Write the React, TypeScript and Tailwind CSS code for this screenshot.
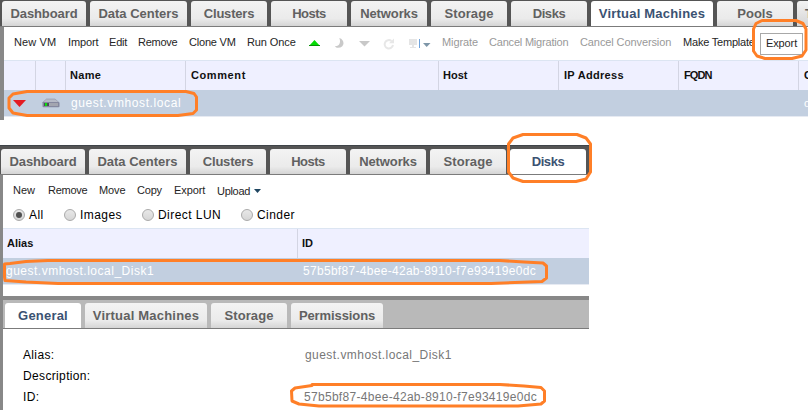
import type { ReactNode } from 'react';

type TabItem = { label: string; box: string; active?: boolean };

const vmTabs: TabItem[] = [
  { label: 'Dashboard', box: 'w-[84px] tracking-[-0.1px]' },
  { label: 'Data Centers', box: 'w-[97px] tracking-[0px]' },
  { label: 'Clusters', box: 'w-[76px] tracking-[-0.2px]' },
  { label: 'Hosts', box: 'w-[76px] tracking-[-0.5px]' },
  { label: 'Networks', box: 'w-[76px] tracking-[-0.1px]' },
  { label: 'Storage', box: 'w-[76px] tracking-[0.1px]' },
  { label: 'Disks', box: 'w-[76px] tracking-[-0.4px]' },
  { label: 'Virtual Machines', box: 'w-[122px] tracking-[0.2px]', active: true },
  { label: 'Pools', box: 'w-[76px] tracking-[0px]' },
];

const diskTabs: TabItem[] = [
  ...vmTabs.slice(0, 6),
  { label: 'Disks', box: 'w-[76px] tracking-[-0.4px]', active: true },
];

const detailTabs: TabItem[] = [
  { label: 'General', box: 'w-[76px] tracking-[0.2px]', active: true },
  { label: 'Virtual Machines', box: 'w-[122px] tracking-[0.2px]' },
  { label: 'Storage', box: 'w-[76px] tracking-[0.1px]' },
  { label: 'Permissions', box: 'w-[92px] tracking-[-0.1px]' },
];

function Tab({ label, box, active }: TabItem) {
  const look = active
    ? 'bg-white text-[#3b5272]'
    : 'bg-linear-to-b from-[#f3f3f3] via-[#ebebeb] via-70% to-[#d5d5d5] text-[#616161]';
  return (
    <div
      className={`flex h-full shrink-0 items-center justify-center rounded-t-[3px] text-[13px] font-bold whitespace-nowrap ${look} ${box}`}
    >
      {label}
    </div>
  );
}

function Tabs({ items }: { items: TabItem[] }) {
  return (
    <>
      {items.map((t) => (
        <Tab key={t.label} {...t} />
      ))}
    </>
  );
}

function Action({ children, box, muted }: { children: ReactNode; box: string; muted?: boolean }) {
  return (
    <span className={`shrink-0 whitespace-nowrap ${muted ? 'text-[#999]' : 'text-[#252525]'} ${box}`}>
      {children}
    </span>
  );
}

function Head({ children, box }: { children?: ReactNode; box: string }) {
  return (
    <div
      className={`flex h-full shrink-0 items-center border-r border-[#d3d5e3] text-[11px] font-bold whitespace-nowrap text-[#111] ${box}`}
    >
      {children}
    </div>
  );
}

function PowerIcons() {
  return (
    <svg className="h-4 w-[133px] shrink-0" viewBox="309 35 133 16">
      <path d="M309 46 L314.5 40 L320 46Z" fill="#04dc04" />
      <path d="M309 45.5H320" stroke="#079207" />
      <path d="M339.3 38 C345 39.5 345.3 47.8 338 47.8 C336.3 47.8 335.3 47 334.8 46.2 C339.8 46.5 341 42 339.3 38Z" fill="#c9c9c9" />
      <path d="M359 41H370L364.5 46.5Z" fill="#c8c8c8" />
      <path d="M391.5 41 A4.2 4.2 0 1 0 393 45" fill="none" stroke="#e7e7e7" strokeWidth="2" />
      <path d="M389 43.3H394V38.5Z" fill="#e7e7e7" />
      <path d="M409 39H417V45H414V47H416V48H410V47H412V45H409Z" fill="#e5e5e5" />
      <path d="M419.5 39V48" stroke="#6fa3dd" />
      <path d="M423 43H430.5L426.7 47Z" fill="#7e96a8" />
    </svg>
  );
}

function ServerIcon() {
  return (
    <svg className="h-[10px] w-[18px] shrink-0" viewBox="0 0 18 10">
      <path d="M4.500 1H13L17 4.500H0.500Z" fill="#b6bac7" stroke="#8f93a5" strokeWidth=".6" />
      <rect x="0.500" y="4" width="17" height="5.300" rx="1" fill="#85889f" />
      <rect x="2" y="5" width="14" height="3" fill="#4b4d58" />
      <rect x="3" y="5" width="2" height="3" fill="#0ce00c" />
      <rect x="7" y="5" width="9" height="3" fill="#a3a5b0" />
    </svg>
  );
}

function VmPanel() {
  return (
    <section className="flex h-[120px] w-full flex-col overflow-hidden">
      <div className="flex h-[27px] shrink-0 gap-1 border-b border-[#7b7b7b] bg-[#555] pt-px pl-[2px]">
        <Tabs items={vmTabs} />
        <div className="flex h-full w-20 shrink-0 items-center rounded-t-[3px] bg-linear-to-b from-[#f3f3f3] to-[#d5d5d5] pl-[8px] text-[13px] font-bold text-[#616161]">
          T
        </div>
      </div>
      <div className="flex min-h-0 flex-1">
        <div className="w-1 shrink-0 bg-[#888]" />
        <div className="flex min-w-0 flex-1 flex-col overflow-hidden">
          <div className="flex h-[33px] shrink-0 items-center pb-[2px] pl-[10px] text-[11px]">
            <Action box="w-[54px] tracking-[0.1px]">New VM</Action>
            <Action box="w-[41px] tracking-[-0.1px]">Import</Action>
            <Action box="w-[29px] tracking-[-0.2px]">Edit</Action>
            <Action box="w-[51px] tracking-[-0.25px]">Remove</Action>
            <Action box="w-[58px] tracking-[-0.2px]">Clone VM</Action>
            <Action box="w-[62px] tracking-[-0.1px]">Run Once</Action>
            <PowerIcons />
            <Action muted box="w-[47px] tracking-[-0.1px]">Migrate</Action>
            <Action muted box="w-[91px] tracking-[-0.2px]">Cancel Migration</Action>
            <Action muted box="w-[103px] tracking-[-0.1px]">Cancel Conversion</Action>
            <Action box="w-[77px] tracking-[-0.2px]">Make Template</Action>
            <div className="mt-[2px] flex h-[22px] w-[43px] shrink-0 items-center justify-center border border-[#a8a8a8] pb-px tracking-[-0.1px] text-[#252525]">
              Export
            </div>
          </div>
          <div className="flex h-[30px] shrink-0 border-t border-[#dce5f2] bg-[#eff0ff]">
            <Head box="w-[32px]" />
            <Head box="w-[30px]" />
            <Head box="w-[120px] pl-1 tracking-[0.3px]">Name</Head>
            <Head box="w-[253px] pl-[5px] tracking-[0.6px]">Comment</Head>
            <Head box="w-[120px] pl-1">Host</Head>
            <Head box="w-[120px] pl-[5px] tracking-[0.3px]">IP Address</Head>
            <Head box="w-[120px] pl-[5px] tracking-[-0.9px]">FQDN</Head>
            <Head box="w-[40px] pl-[5px]">C</Head>
          </div>
          <div className="flex h-[27px] shrink-0 items-center border-b border-[#e6eaf2] bg-[#c2cfe0] text-[12px] text-white">
            <div className="flex w-[32px] shrink-0 justify-center pr-[1px]">
              <svg className="h-[7px] w-[13px]" viewBox="0 0 13 7">
                <path d="M0 0H13L6.5 7Z" fill="#e31b23" />
              </svg>
            </div>
            <div className="flex w-[35px] shrink-0 pl-[6px]">
              <ServerIcon />
            </div>
            <div className="w-[733px] shrink-0 tracking-[0.6px]">guest.vmhost.local</div>
            <div className="shrink-0 text-[11px]">o</div>
          </div>
        </div>
      </div>
    </section>
  );
}

function Radio({ label, checked, box }: { label: string; checked?: boolean; box: string }) {
  return (
    <label className={`flex shrink-0 items-center gap-1 whitespace-nowrap ${box}`}>
      <span className="flex size-[12px] items-center justify-center rounded-full border border-[#aaa] bg-linear-to-b from-[#e8e8e8] to-[#d6d6d6]">
        {checked && <span className="size-[6px] rounded-full bg-[#505050]" />}
      </span>
      {label}
    </label>
  );
}

function Detail({ name, value, box }: { name: string; value?: string; box?: string }) {
  return (
    <div className="flex h-[21px] items-center">
      <dt className="w-[281px] tracking-[0.35px] text-black">{name}</dt>
      <dd className={`whitespace-nowrap text-[#777] ${box ?? ''}`}>{value}</dd>
    </div>
  );
}

function DisksPanel() {
  return (
    <section className="mt-[25px] flex h-[265px] w-[589px] flex-col overflow-hidden">
      <div className="flex h-[30px] shrink-0 gap-1 border-t border-b border-t-[#3f4449] border-b-[#7b7b7b] bg-[#555] pt-[3px] pl-px">
        <Tabs items={diskTabs} />
      </div>
      <div className="flex min-h-0 flex-1">
        <div className="w-[3px] shrink-0 bg-[#888]" />
        <div className="flex flex-1 flex-col">
          <div className="flex h-[30px] shrink-0 items-center pl-[10px] text-[11px]">
            <Action box="w-[35px]">New</Action>
            <Action box="w-[51px] tracking-[-0.25px]">Remove</Action>
            <Action box="w-[38px] tracking-[-0.1px]">Move</Action>
            <Action box="w-[37px] tracking-[-0.2px]">Copy</Action>
            <Action box="w-[43px] tracking-[-0.1px]">Export</Action>
            <Action box="mt-[2px] w-[37px] tracking-[-0.3px]">Upload</Action>
            <svg className="mt-[2px] h-1 w-[7px]" viewBox="0 0 7 4">
              <path d="M0 0H7L3.5 4Z" fill="#1e4560" />
            </svg>
          </div>
          <div className="flex h-[23px] shrink-0 pb-[4px] pl-[10px] text-[12px] tracking-[0.45px] text-black">
            <Radio label="All" checked box="w-[51px]" />
            <Radio label="Images" box="w-[78px]" />
            <Radio label="Direct LUN" box="w-[99px]" />
            <Radio label="Cinder" box="" />
          </div>
          <div className="flex h-[30px] shrink-0 border-t border-[#dce5f2] bg-[#eff0ff]">
            <Head box="w-[295px] pl-1">Alias</Head>
            <div className="flex items-center pl-1 text-[11px] font-bold text-[#111]">ID</div>
          </div>
          <div className="flex h-[27px] shrink-0 items-center border-b border-[#e6eaf2] bg-[#c2cfe0] text-[12px] text-white">
            <div className="w-[297px] pl-[3px] tracking-[0.5px]">guest.vmhost.local_Disk1</div>
            <div className="pl-[3px] tracking-[0.3px]">57b5bf87-4bee-42ab-8910-f7e93419e0dc</div>
          </div>
          <div className="h-[11px] shrink-0" />
          <div className="flex h-[33px] shrink-0 gap-1 border-t-4 border-b border-t-[#888] border-b-[#7b7b7b] bg-[#b9b9b9] pt-[3px] pl-[2px]">
            <Tabs items={detailTabs} />
          </div>
          <dl className="flex flex-col pt-[15px] pl-[20px] text-[12px]">
            <Detail name="Alias:" value="guest.vmhost.local_Disk1" box="pl-px tracking-[0.45px]" />
            <Detail name="Description:" />
            <Detail name="ID:" value="57b5bf87-4bee-42ab-8910-f7e93419e0dc" box="tracking-[0.3px]" />
          </dl>
        </div>
      </div>
    </section>
  );
}

function Annotations() {
  return (
    <svg
      className="pointer-events-none absolute inset-0 h-[410px] w-[808px]"
      viewBox="0 0 808 410"
      fill="none"
      stroke="#ff7f27"
      strokeWidth="3"
      strokeLinejoin="round"
    >
      <path d="M27 91.5H186L194 93.5L196.5 97V110L193 113.5L178 115.5H27L13 113L9 108V98L13 94Z" />
      <path d="M762 20.5H796L803 23.5L806 29V50L802 56L792 58.5H765L757 56L753.5 51V29L756 23.5Z" />
      <path d="M523 134.5H577L586 138L590.5 144V172L586 179L576 181.5H523L513 178L508.5 172V144L513 138Z" />
      <path d="M48 260.5H500L524 262L543 263L546.5 266V278L542 281.5L491 283.5H58L26 282L5 280.5L4.5 277V264L10 263.5L26 261.5Z" />
      <path d="M312 384.5H500L524 386L541 387.5L544.5 391V401L541 404L518 406H319L299 404L292 401L291.5 391L295 388L312 385.5Z" />
    </svg>
  );
}

export default function App() {
  return (
    <main className="relative h-[410px] w-[808px] overflow-hidden bg-white font-['Liberation_Sans',Arial,sans-serif]">
      <VmPanel />
      <DisksPanel />
      <Annotations />
    </main>
  );
}
